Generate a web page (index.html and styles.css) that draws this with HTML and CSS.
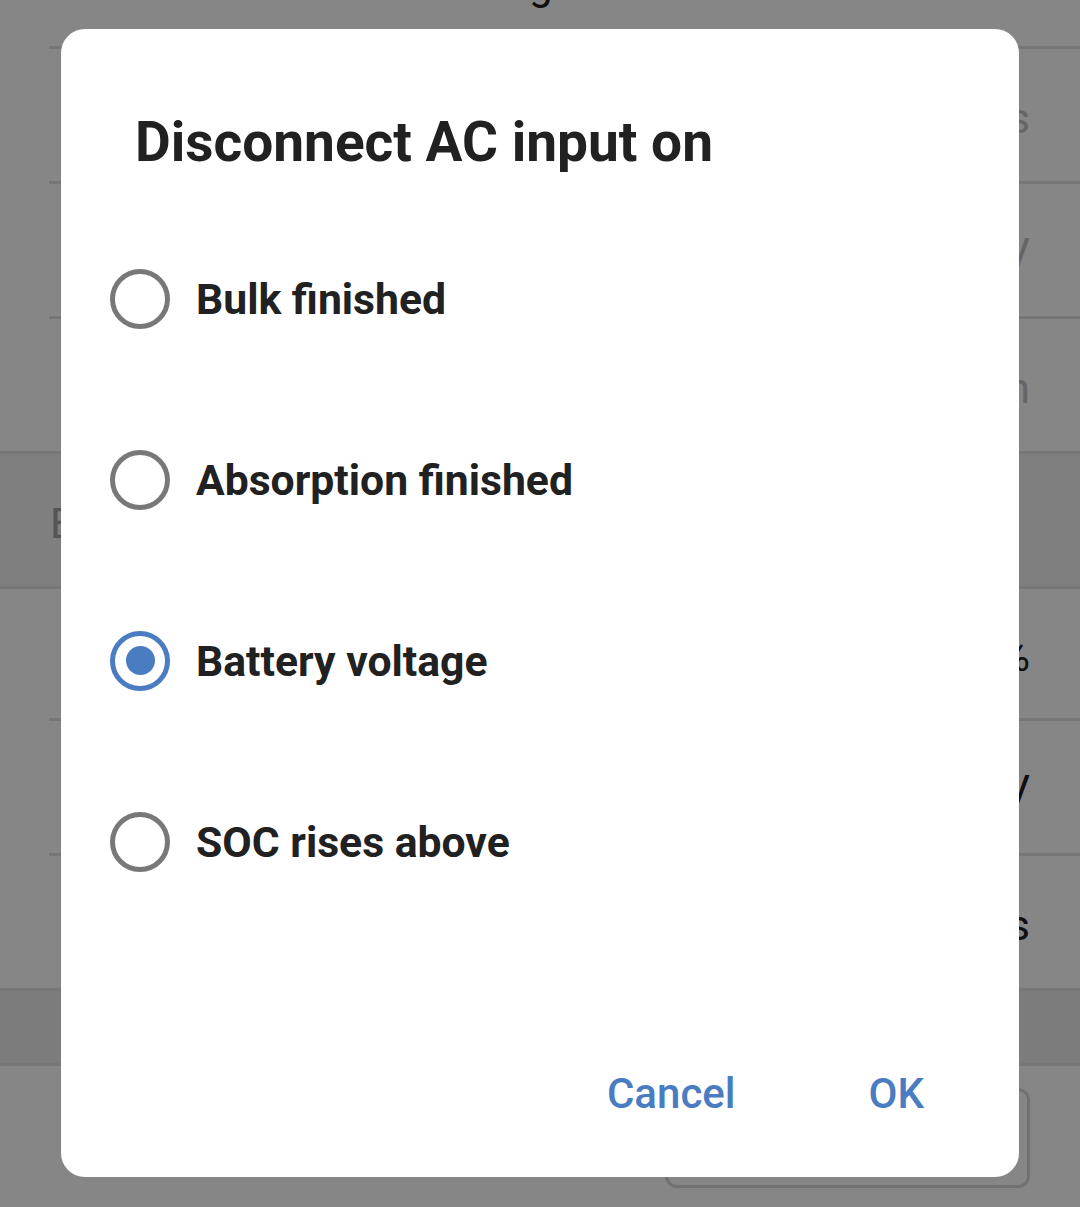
FILE: index.html
```html
<!DOCTYPE html>
<html lang="en">
<head>
<meta charset="utf-8">
<title>Disconnect AC input on</title>
<link rel="stylesheet" href="styles.css">
</head>
<body>
<div class="screen">
  <div class="header"><span class="header-text">Setting</span></div>
  <div class="divider inset"></div>
  <div class="row"><span class="value muted">4 hours</span></div>
  <div class="divider inset"></div>
  <div class="row"><span class="value muted">52.80V</span></div>
  <div class="divider inset"></div>
  <div class="row"><span class="value muted">Open</span></div>
  <div class="divider"></div>
  <div class="row section"><span class="section-title">Enable</span></div>
  <div class="divider"></div>
  <div class="row short"><span class="value">85%</span></div>
  <div class="divider inset"></div>
  <div class="row"><span class="value">54.00V</span></div>
  <div class="divider inset"></div>
  <div class="row"><span class="value">10 seconds</span></div>
  <div class="divider"></div>
  <div class="row strip"></div>
  <div class="divider"></div>
  <div class="bottom"><div class="outline-btn"></div></div>
</div>

<div class="scrim"></div>

<div class="dialog" role="dialog" aria-labelledby="dlg-title">
  <h1 class="dialog-title" id="dlg-title">Disconnect AC input on</h1>
  <div class="options">
    <label class="option"><span class="radio"></span><span class="option-text">Bulk finished</span></label>
    <label class="option"><span class="radio"></span><span class="option-text">Absorption finished</span></label>
    <label class="option"><span class="radio checked"></span><span class="option-text">Battery voltage</span></label>
    <label class="option"><span class="radio"></span><span class="option-text">SOC rises above</span></label>
  </div>
  <div class="actions">
    <button class="action">Cancel</button>
    <button class="action">OK</button>
  </div>
</div>
</body>
</html>
```
FILE: styles.css
```css
* { box-sizing: border-box; }
html, body {
  margin: 0;
  padding: 0;
  width: 1080px;
  height: 1207px;
  overflow: hidden;
  background: #ffffff;
  font-family: Roboto, "Liberation Sans", sans-serif;
}
.screen {
  display: flex;
  flex-direction: column;
  width: 1080px;
  height: 1207px;
}
.header {
  height: 46px;
  padding-left: 421px;
}
.header-text {
  display: block;
  margin-top: -36px;
  font-size: 42px;
  line-height: 42px;
  color: #202020;
}
.divider {
  height: 3px;
  background: #e1e1e1;
  flex: none;
}
.divider.inset { margin-left: 49px; }
.row {
  height: 132px;
  flex: none;
  display: flex;
  align-items: center;
  justify-content: flex-end;
  padding: 6px 50px 0 140px;
  font-size: 42px;
  color: #202020;
}
.row.short { height: 129px; }
.row.section {
  background: #f2f2f2;
  padding-left: 50px;
  justify-content: flex-start;
}
.row.strip {
  height: 72px;
  background: #ececec;
}
.value { color: #202020; }
.value.muted { color: #c2c2c2; }
.section-title {
  color: #a2a2a2;
  font-size: 42px;
}
.bottom {
  flex: 1;
  padding: 22px 0 0 665px;
}
.outline-btn {
  width: 365px;
  height: 100px;
  border: 3px solid #dadada;
  border-radius: 12px;
}

.scrim {
  position: absolute;
  inset: 0;
  background: rgba(0, 0, 0, 0.4745);
}

.dialog {
  position: absolute;
  left: 61px;
  top: 29px;
  width: 958px;
  height: 1148px;
  background: #ffffff;
  border-radius: 24px;
  display: flex;
  flex-direction: column;
}
.dialog-title {
  margin: 0;
  padding: 80px 0 0 74px;
  font-size: 55px;
  line-height: 66px;
  font-weight: 700;
  color: #212121;
}
.options {
  display: flex;
  flex-direction: column;
  margin-top: 33px;
  padding-left: 49px;
}
.option {
  height: 181px;
  display: flex;
  align-items: center;
  gap: 26px;
}
.radio {
  width: 60px;
  height: 60px;
  border-radius: 50%;
  border: 5px solid #787878;
  display: flex;
  align-items: center;
  justify-content: center;
  flex: none;
}
.radio.checked { border-color: #4a7cc1; }
.radio.checked::after {
  content: "";
  width: 29px;
  height: 29px;
  border-radius: 50%;
  background: #4a7cc1;
}
.option-text {
  font-size: 42.7px;
  font-weight: 700;
  color: #212121;
}
.actions {
  margin-top: auto;
  display: flex;
  justify-content: flex-end;
  gap: 67px;
  padding: 0 62px 33px 0;
}
.action {
  height: 100px;
  padding: 0 33px;
  border: none;
  background: none;
  font-family: Roboto, "Liberation Sans", sans-serif;
  font-size: 42px;
  font-weight: 500;
  color: #4a7cc1;
  line-height: 100px;
}
```
